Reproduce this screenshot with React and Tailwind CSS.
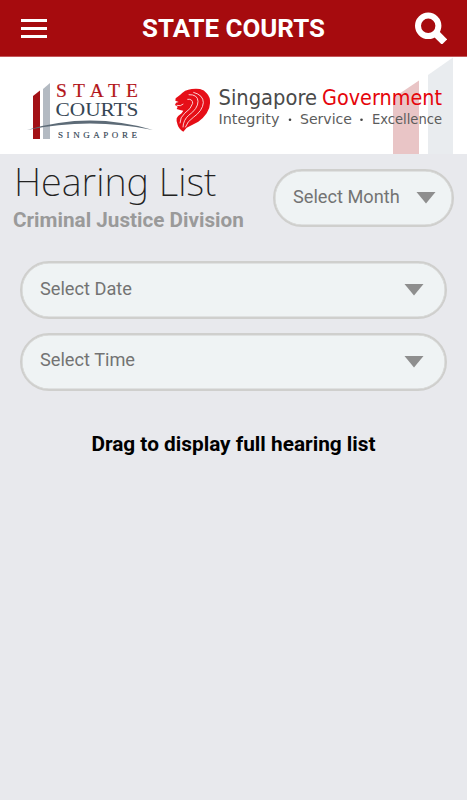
function Header() {
  return (
    <header className="flex h-[57px] shrink-0 items-center justify-between border-b border-[#c4575a] bg-[#a60b0e] pl-[21px] pr-[20px]">
      <button className="flex w-[26px] flex-col gap-[5px]" aria-label="Menu">
        <span className="h-[3px] w-full bg-white" />
        <span className="h-[3px] w-full bg-white" />
        <span className="h-[3px] w-full bg-white" />
      </button>
      <h1 className="pt-[2px] pl-[5px] text-[25.9px] leading-none font-bold text-white">STATE COURTS</h1>
      <button aria-label="Search">
        <svg width="32" height="32" viewBox="0 0 32 32" fill="none" stroke="white">
          <circle cx="13.200" cy="13.800" r="10.200" strokeWidth="6" />
          <path d="M20 20.500 29.500 30" strokeWidth="7.500" />
        </svg>
      </button>
    </header>
  );
}

function CourtsLogo() {
  return (
    <svg className="h-full w-[160px] shrink-0" viewBox="0 57 160 97" fontFamily="'Liberation Serif', serif">
      <path d="M33 96 40 90.500V139H33Z" fill="#a31116" />
      <path d="M43 89 50 83V139H43Z" fill="#b3bac2" />
      <path d="M27 130Q90 111 153 130Q90 117 27 130Z" fill="#5d6b77" />
      <text x="56" y="97.300" fontSize="19.500" fill="#b3151a" stroke="#b3151a" strokeWidth="0.200" textLength="82">STATE</text>
      <text x="55.500" y="115.800" fontSize="19.500" fill="#354654" textLength="83" lengthAdjust="spacingAndGlyphs">COURTS</text>
      <text x="58" y="138" fontSize="9" fill="#354654" stroke="#354654" strokeWidth="0.150" textLength="79">SINGAPORE</text>
    </svg>
  );
}

function GovernmentLogo() {
  return (
    <svg className="h-full w-[307px] shrink-0" viewBox="160 57 307 97" fontFamily="'DejaVu Sans', sans-serif">
      <path d="M393 98 419 80.500V154H393Z" fill="#e9c5c6" />
      <path d="M428 75 453 57.500V154H428Z" fill="#e9ecef" />
      {/* lion head */}
      <g transform="translate(172 84) scale(0.3333)">
        <path
          d="M11 43 24 33Q38 17 59 15Q72 13 84 15Q97 18 104 28Q116 40 114 58Q114 74 104 88Q94 103 79 113L44 131 34 143Q20 134 17 123Q12 112 14 103Q18 95 29 88L34 80Q24 78 14 75L17 68 9 63 12 56 20 54 10 50Z"
          fill="#e60e17"
        />
        <g fill="none" stroke="white" strokeWidth="2.400">
          <path d="M46 46Q62 44 62 58Q58 74 38 88Q24 100 24 118" />
          <path d="M50 32Q77 31 78 52Q78 74 50 94Q34 108 33 130" />
          <path d="M64 25Q94 33 94 56Q92 80 64 100Q46 112 40 130" />
          <path d="M14 64Q26 68 34 60" />
        </g>
      </g>
      <text x="218.500" y="105" fontSize="20.800" fill="#4a4a4a" textLength="98.500" lengthAdjust="spacingAndGlyphs">Singapore</text>
      <text x="322" y="105" fontSize="20.800" fill="#e5050b" textLength="120" lengthAdjust="spacingAndGlyphs">Government</text>
      <g fontSize="14" fill="#5c5c5c">
        <text x="218.500" y="123.500" textLength="61" lengthAdjust="spacingAndGlyphs">Integrity</text>
        <text x="300" y="123.500" textLength="52" lengthAdjust="spacingAndGlyphs">Service</text>
        <text x="372" y="123.500" textLength="70" lengthAdjust="spacingAndGlyphs">Excellence</text>
      </g>
      <circle cx="290" cy="119.800" r="1.300" fill="#444" />
      <circle cx="361.500" cy="119.800" r="1.300" fill="#444" />
    </svg>
  );
}

function Select({ label, className }) {
  return (
    <button
      className={`flex h-[58px] items-center justify-between rounded-full border-2 border-[#cfcfcd] bg-[#eff3f4] text-[#737373] shadow-[inset_0_0_0_0.5px_#cfcfcd] ${className}`}
    >
      <span className="pb-[2px] text-[18.2px] leading-none">{label}</span>
      <svg width="20" height="12" viewBox="0 0 20 12" fill="#8e8e8e">
        <path d="M0.500 0H19.500L10 11.500Z" />
      </svg>
    </button>
  );
}

export default function App() {
  return (
    <div className="flex h-[800px] w-[467px] flex-col overflow-hidden bg-[#e8e9ed] font-['Roboto',sans-serif]">
      <Header />
      <div className="flex h-[97px] shrink-0 bg-white">
        <CourtsLogo />
        <GovernmentLogo />
      </div>
      <main className="flex flex-col">
        <div className="flex justify-between px-[13px]">
          <div className="pt-[4px]">
            <h2 className="pl-px font-['Noto_Sans',sans-serif] text-[38px] leading-[46px] font-extralight text-[#222]">Hearing List</h2>
            <p className="pt-[2px] text-[20.7px] leading-[28px] font-bold text-[#9a9a9a]">Criminal Justice Division</p>
          </div>
          <Select label="Select Month" className="mt-[15px] w-[181px] pl-[18px] pr-[16px]" />
        </div>
        <div className="mt-[27px] flex flex-col gap-[13.500px] px-[20px]">
          <Select label="Select Date" className="w-full pl-[18px] pr-[21px]" />
          <Select label="Select Time" className="w-full pl-[18px] pr-[21px]" />
        </div>
        <p className="mt-[39px] text-center text-[20.8px] leading-[28px] font-bold text-black">
          Drag to display full hearing list
        </p>
      </main>
    </div>
  );
}
